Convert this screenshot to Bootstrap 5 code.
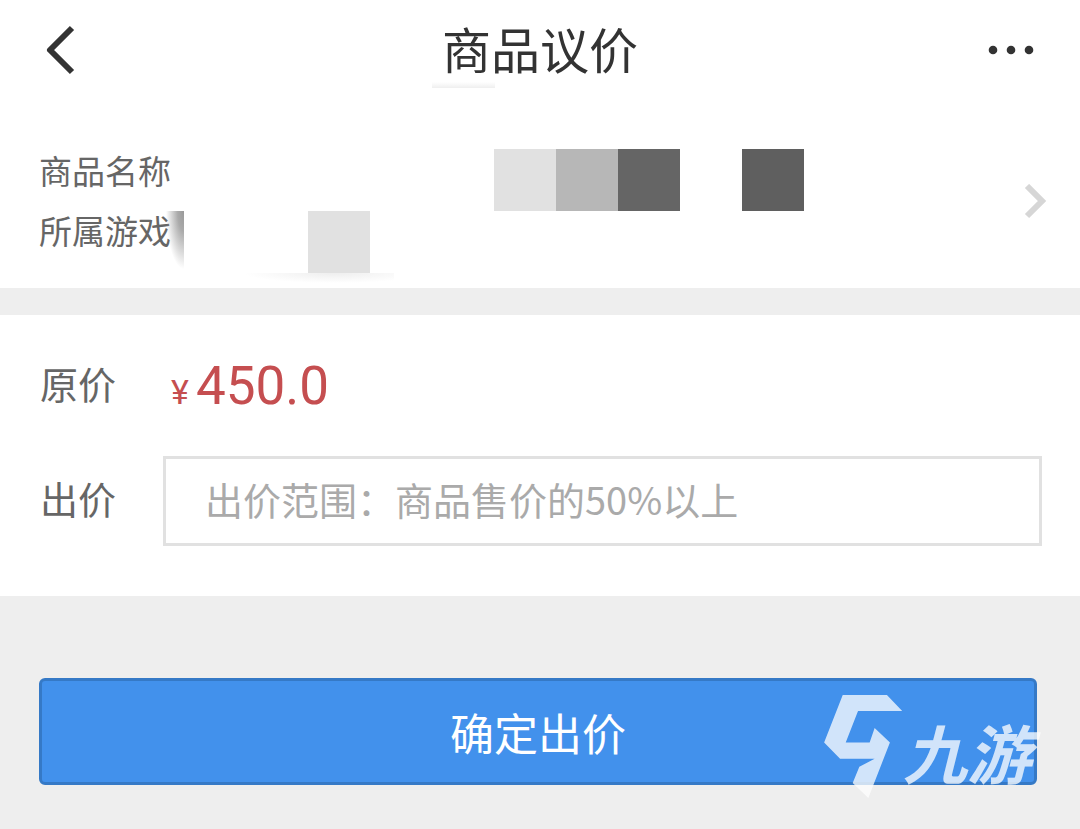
<!DOCTYPE html>
<html lang="zh-CN">
<head>
<meta charset="utf-8">
<meta name="viewport" content="width=device-width, initial-scale=1">
<title>商品议价</title>
<link href="https://cdn.jsdelivr.net/npm/bootstrap@5.3.0/dist/css/bootstrap.min.css" rel="stylesheet">
<style>
  body { background: #eee; color: #666; font-family: "Noto Sans CJK SC", sans-serif; }
  .topbar { height: 100px; padding: 0 40px; }
  .topbar h1 { font-size: 49px; line-height: 72px; color: #333; font-weight: 400; padding-bottom: 4px; }
  .title-shade { left: -10px; bottom: 0; width: 63px; height: 6px; background: linear-gradient(#fff, #efefef); }
  .icon-btn { width: 60px; color: #333; line-height: 0; }
  .goods { padding: 40px 32px 15px 39px; }
  .goods-labels { width: 145px; font-size: 33px; line-height: 60px; }
  .mosaic { display: grid; grid-template-columns: repeat(10, 62px); grid-template-rows: 62px 62px; margin-top: 9px; }
  .mosaic::before { content: ""; position: absolute; left: -18px; top: 62px; width: 18px; height: 58px;
    background: radial-gradient(ellipse 18px 58px at 100% 0, #999 0, #aaa 35%, #fff0 100%); }
  .mosaic::after { content: ""; position: absolute; left: 10px; top: 124px; width: 200px; height: 10px;
    background: radial-gradient(ellipse 90px 10px at 70% 0, #eee, #fff0); }
  .offer { margin-top: 27px; padding: 36px 38px 50px 40px; }
  .price-row { margin-bottom: 35px; }
  .field-label { width: 123px; font-size: 38px; line-height: 58px; padding-bottom: 6px; }
  .price { font-family: Roboto, sans-serif; color: #c54e50; font-size: 53px; line-height: 70px; padding-left: 8px; }
  .price small { font-size: 34px; line-height: 1; margin-right: 7px; }
  .offer-input { height: 90px; border: 3px solid #e1e1e1; padding: 0 39px 6px; font-size: 38px; color: #666; }
  .offer-input::placeholder { color: #aaa; opacity: 1; }
  .submit-area { padding: 82px 43px 44px 39px; }
  .btn-offer { height: 107px; font-size: 44px; color: #fff; background: #4291ec; border: 3px solid #3579c6; border-radius: 6px; }
  .btn-offer:hover { color: #fff; background: #3b87df; border-color: #3579c6; }
  .watermark { right: 6px; top: 17px; color: #fff; opacity: .76; pointer-events: none; }
  .watermark span { font-size: 64px; line-height: 64px; font-weight: 700; font-style: italic; margin-top: 24px; }
</style>
</head>
<body>
<header class="topbar bg-white d-flex align-items-center justify-content-between">
  <button type="button" class="icon-btn btn p-0 border-0 rounded-0 text-start" aria-label="返回">
    <svg width="40" height="50" viewBox="0 0 40 50" fill="none" stroke="currentColor" stroke-width="6" stroke-linejoin="round"><path d="M32 3 10 25 32 47"/></svg>
  </button>
  <div class="position-relative">
    <h1 class="m-0">商品议价</h1>
    <span class="title-shade position-absolute"></span>
  </div>
  <button type="button" class="icon-btn btn p-0 border-0 rounded-0 text-end" aria-label="更多">
    <svg width="54" height="10" viewBox="0 0 54 10" fill="currentColor"><circle cx="7" cy="5" r="4.300"/><circle cx="25" cy="5" r="4.300"/><circle cx="43" cy="5" r="4.300"/></svg>
  </button>
</header>
<main>
  <section class="goods bg-white d-flex align-items-start">
    <div class="goods-labels flex-shrink-0"><div>商品名称</div><div>所属游戏</div></div>
    <div class="mosaic position-relative" aria-hidden="true">
      <i style="grid-area:1/6;background:#e1e1e1"></i>
      <i style="grid-area:1/7;background:#b7b7b7"></i>
      <i style="grid-area:1/8;background:#656565"></i>
      <i style="grid-area:1/10;background:#5f5f5f"></i>
      <i style="grid-area:2/3;background:#e1e1e1"></i>
    </div>
    <a href="#" class="d-flex ms-auto align-self-center mb-2" aria-label="商品详情">
      <svg width="24" height="38" viewBox="0 0 24 38" fill="none" stroke="#d6d6d6" stroke-width="6"><path d="M3 2 18 17 3 32"/></svg>
    </a>
  </section>
  <section class="offer bg-white">
    <div class="price-row d-flex align-items-center">
      <div class="field-label">原价</div>
      <div class="price"><small>¥</small>450.0</div>
    </div>
    <div class="d-flex align-items-center">
      <label for="offer" class="field-label flex-shrink-0">出价</label>
      <input id="offer" type="text" class="offer-input form-control rounded-0" placeholder="出价范围：商品售价的50%以上">
    </div>
  </section>
  <section class="submit-area">
    <div class="position-relative">
      <button type="button" class="btn btn-offer w-100 p-0">确定出价</button>
      <div class="watermark position-absolute d-flex align-items-start">
        <svg width="79" height="103" viewBox="133 105 237 310" fill="currentColor"><path d="M189 105H322L368 153H235L198 248H270L285 204 331 248 266 415 219 370 239 321 285 297H181L133 248Z"/></svg>
        <span>九游</span>
      </div>
    </div>
  </section>
</main>
<script src="https://cdn.jsdelivr.net/npm/bootstrap@5.3.0/dist/js/bootstrap.bundle.min.js"></script>
</body>
</html>
